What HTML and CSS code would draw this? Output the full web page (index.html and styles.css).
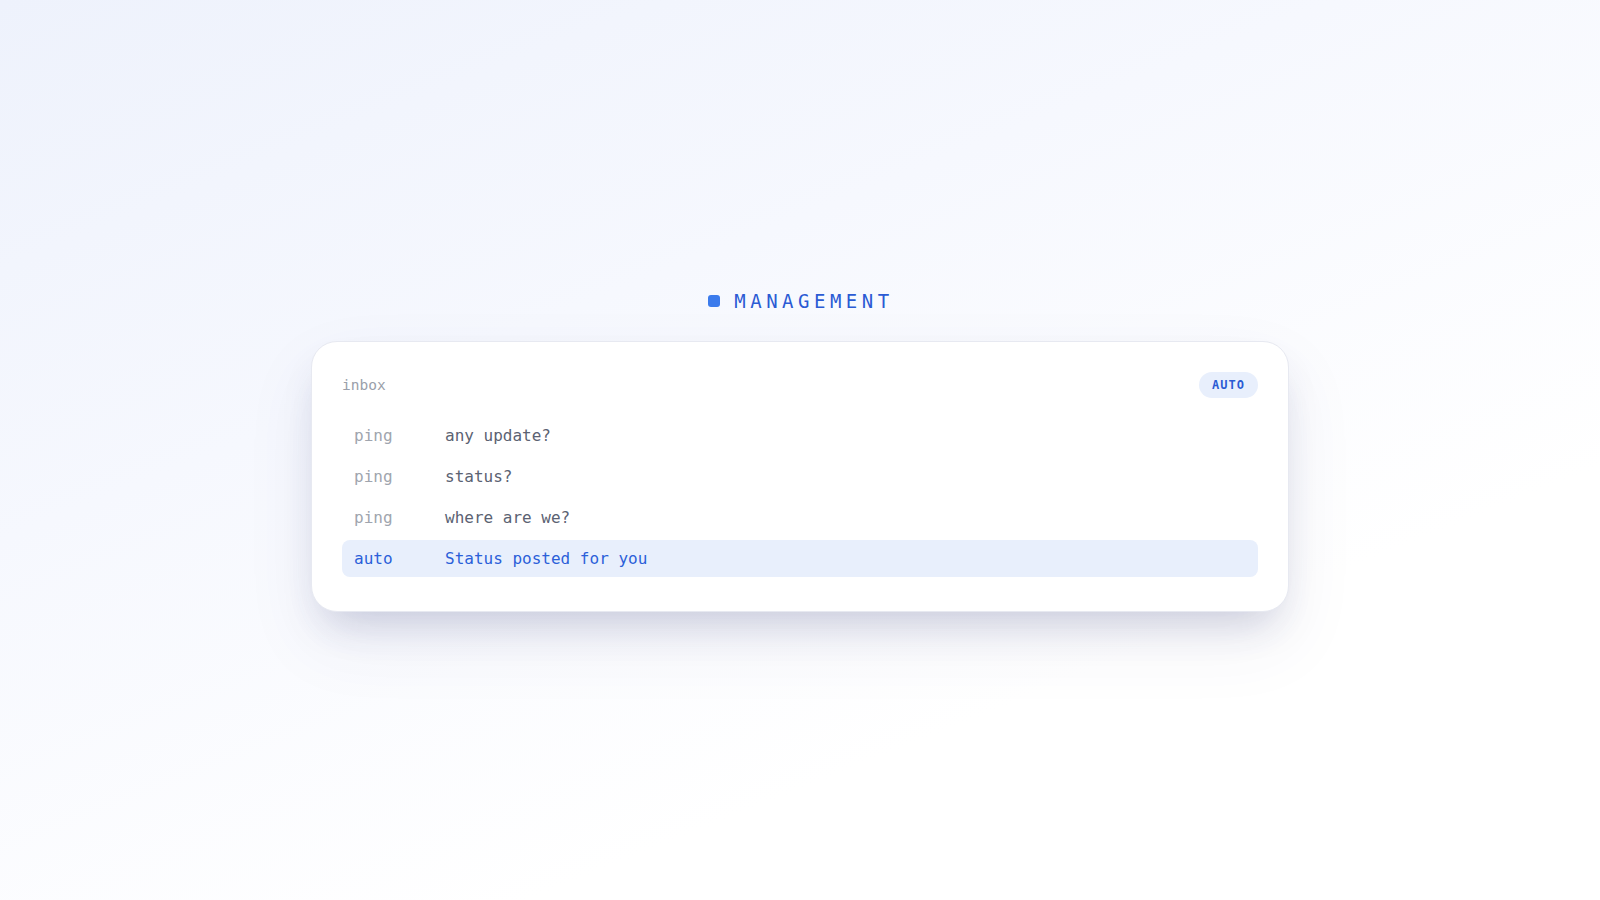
FILE: index.html
```html
<!DOCTYPE html>
<html lang="en">

<head>
    <meta charset="UTF-8">
    <meta name="viewport" content="width=device-width, initial-scale=1.0">
    <title>Management</title>
    <link rel="stylesheet" href="styles.css">
</head>

<body>

    <div class="stage">
        <!-- section title -->
        <div class="title">
            <span class="dot"></span>
            <span class="title-text">MANAGEMENT</span>
        </div>

        <!-- inbox card -->
        <div class="card">
            <div class="card-head">
                <span class="label">inbox</span>
                <span class="pill">AUTO</span>
            </div>
            <div class="rows">
                <div class="row">
                    <span class="from">ping</span>
                    <span class="msg">any update?</span>
                </div>
                <div class="row">
                    <span class="from">ping</span>
                    <span class="msg">status?</span>
                </div>
                <div class="row">
                    <span class="from">ping</span>
                    <span class="msg">where are we?</span>
                </div>
                <div class="row active">
                    <span class="from">auto</span>
                    <span class="msg">Status posted for you</span>
                </div>
            </div>
        </div>
    </div>

</body>

</html>
```

FILE: styles.css
```css
html, body {
    height: 100%;
}
body {
    margin: 0;
    font-family: "DejaVu Sans Mono", "Liberation Mono", monospace;
    background: linear-gradient(158deg, #eef2fc 0%, #f6f8fe 35%, #ffffff 72%);
}
.stage {
    height: 100%;
    display: flex;
    flex-direction: column;
    align-items: center;
    justify-content: center;
    padding-top: 1px;
    box-sizing: border-box;
}
.title {
    display: flex;
    align-items: center;
    gap: 14px;
    margin-bottom: 29px;
    margin-left: 2px;
}
.dot {
    width: 12px;
    height: 12px;
    border-radius: 3px;
    background-color: #3b7bec;
}
.title-text {
    font-size: 19px;
    letter-spacing: 4.5px;
    color: #2b5bd4;
    font-weight: 500;
}
.card {
    width: 978px;
    box-sizing: border-box;
    padding: 30px 30px 34px;
    background-color: #fff;
    border: 1px solid #e7e9f1;
    border-radius: 26px;
    box-shadow: 0 22px 40px -14px rgba(50, 60, 120, 0.22),
                0 30px 70px rgba(60, 70, 130, 0.08);
}
.card-head {
    display: flex;
    justify-content: space-between;
    align-items: center;
    margin-bottom: 19px;
}
.label {
    font-size: 14.5px;
    color: #9aa0aa;
}
.pill {
    height: 26px;
    line-height: 26px;
    padding: 0 13px;
    border-radius: 13px;
    font-size: 12px;
    font-weight: bold;
    letter-spacing: 1px;
    color: #2b5bd4;
    background-color: #e8effc;
}
.rows {
    display: flex;
    flex-direction: column;
    gap: 4px;
}
.row {
    display: flex;
    align-items: center;
    height: 37px;
    padding: 0 12px;
    border-radius: 8px;
    font-size: 16px;
}
.from {
    width: 91px;
    color: #a0a5ae;
}
.msg {
    color: #5b6272;
}
.row.active {
    background-color: #e8effc;
}
.row.active .from,
.row.active .msg {
    color: #2b5fd9;
}
```
